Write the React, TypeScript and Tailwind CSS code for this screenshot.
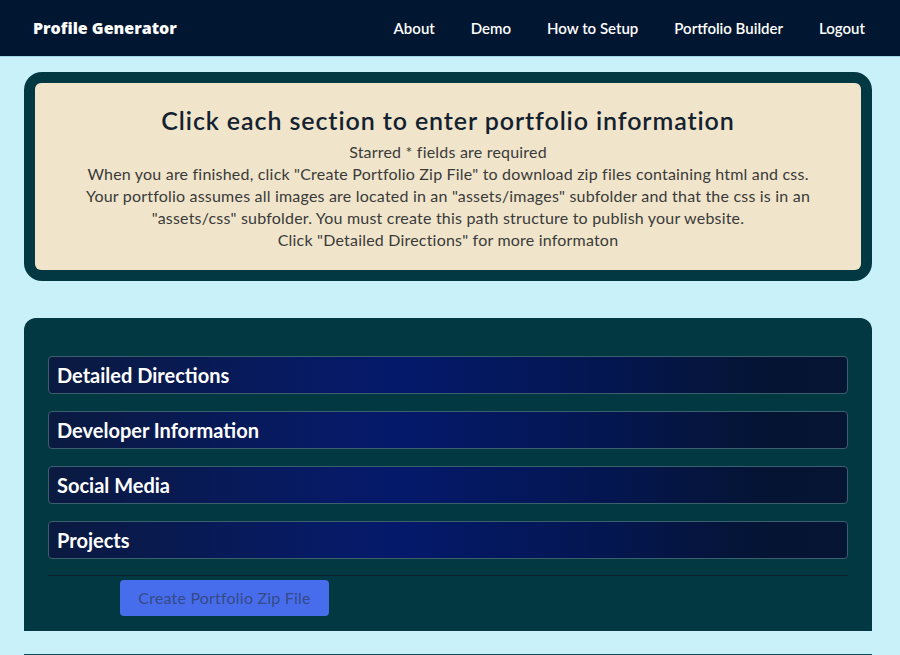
import React from "react";

const sections = ["Detailed Directions", "Developer Information", "Social Media", "Projects"];
const navLinks = ["About", "Demo", "How to Setup", "Portfolio Builder", "Logout"];

export default function App() {
  return (
    <div className="min-h-[655px] bg-[#c8f1f9] font-['Lato',sans-serif]">
      <nav className="h-[57px] bg-[#011631] border-b border-[#9fd7e6] flex items-center justify-between pl-[33px] pr-[35px]">
        <div className="text-white text-[16px] font-extrabold font-['Open_Sans',sans-serif] [font-variant-ligatures:none]">Profile Generator</div>
        <div className="flex items-center gap-[36px] text-white text-[15px] font-semibold">
          {navLinks.map((l) => (
            <span key={l}>{l}</span>
          ))}
        </div>
      </nav>

      <div className="ml-[24px] w-[848px] mt-[15px] bg-[#023842] rounded-[18px] p-[11px]">
        <div className="bg-[#f0e5cb] rounded-[6px] pt-[22px] pb-[19px] text-center">
          <h1 className="text-[25px] leading-[30px] font-semibold text-[#14212f] tracking-[0.9px]">
            Click each section to enter portfolio information
          </h1>
          <div className="mt-[6px] text-[16px] leading-[22px] text-[#3a3a3a] tracking-[0.2px]">
            <p>Starred * fields are required</p>
            <p>When you are finished, click "Create Portfolio Zip File" to download zip files containing html and css.</p>
            <p className="px-[10px]">
              Your portfolio assumes all images are located in an "assets/images" subfolder and that the css is in an "assets/css" subfolder. You must create this path structure to publish your website.
            </p>
            <p>Click "Detailed Directions" for more informaton</p>
          </div>
        </div>
      </div>

      <div className="ml-[24px] w-[848px] mt-[37px] bg-[#023842] rounded-t-[12px] pt-[38px] px-[24px] pb-[15px]">
        <div className="flex flex-col gap-[17px]">
          {sections.map((s) => (
            <div
              key={s}
              className="h-[38px] rounded-[4px] border border-[#3b5f6c] bg-[linear-gradient(to_right,#0a1a40_0%,#061a66_35%,#04196a_45%,#041650_70%,#051433_90%,#061533_100%)] flex items-center pl-[8px] text-white text-[20px] font-bold"
            >
              {s}
            </div>
          ))}
        </div>
        <div className="mt-[16px] border-t border-[#0d222a]" />
        <div className="mt-[4px] pl-[72px]">
          <button className="h-[36px] w-[209px] rounded-[4px] bg-[#476ded] text-[#354a86] text-[16px] leading-none tracking-[0.2px]">
            Create Portfolio Zip File
          </button>
        </div>
      </div>

      <div className="ml-[24px] w-[848px] mt-[23px] border-t-2 border-[#0c4b5a]" />
    </div>
  );
}
